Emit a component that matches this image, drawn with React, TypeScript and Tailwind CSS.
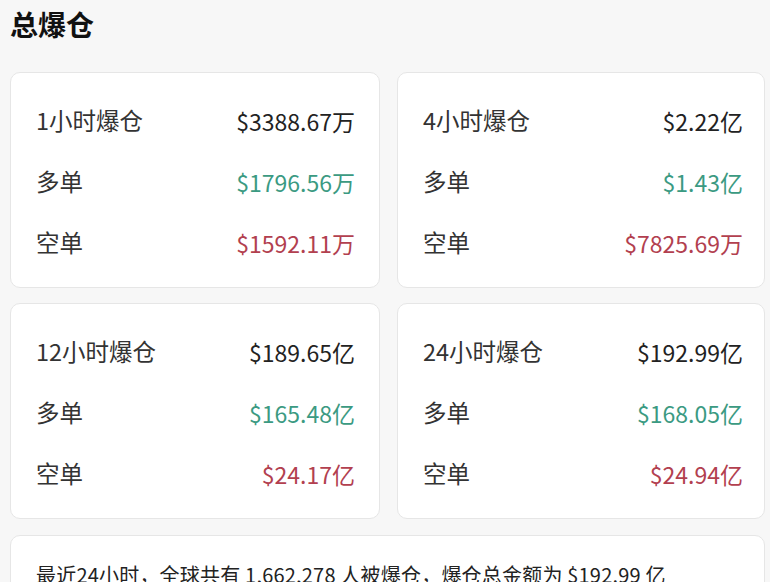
const FONT = { fontFamily: '"Noto Sans CJK SC", "Noto Sans", sans-serif' };

type Block = {
  label: string;
  total: string;
  long: string;
  short: string;
};

const BLOCKS: Block[] = [
  { label: "1小时爆仓", total: "$3388.67万", long: "$1796.56万", short: "$1592.11万" },
  { label: "4小时爆仓", total: "$2.22亿", long: "$1.43亿", short: "$7825.69万" },
  { label: "12小时爆仓", total: "$189.65亿", long: "$165.48亿", short: "$24.17亿" },
  { label: "24小时爆仓", total: "$192.99亿", long: "$168.05亿", short: "$24.94亿" },
];

function Row({ label, value, color }: { label: string; value: string; color: string }) {
  return (
    <div className="flex h-[28px] items-center justify-between">
      <span className="text-[23.5px] text-[#333]">{label}</span>
      <span className={`text-[23px] ${color}`}>{value}</span>
    </div>
  );
}

function Card({ b, right }: { b: Block; right: boolean }) {
  return (
    <div
      className={`flex h-[216px] flex-col gap-[33px] rounded-[10px] border border-[#e6e6e6] bg-white pb-[32px] pl-[25px] pt-[34px] ${
        right ? "pr-[21px]" : "pr-[24px]"
      }`}
    >
      <Row label={b.label} value={b.total} color="text-[#222]" />
      <Row label="多单" value={b.long} color="text-[#3b9a82]" />
      <Row label="空单" value={b.short} color="text-[#b2404f]" />
    </div>
  );
}

export default function App() {
  return (
    <div className="h-[582px] w-[770px] overflow-hidden bg-[#f7f7f7] pl-[10px] pr-[5px]" style={FONT}>
      <h1 className="pt-[5px] text-[28px] font-bold leading-[38px] text-[#111]">总爆仓</h1>
      <div className="mt-[29px] grid grid-cols-[370px_368px] gap-x-[17px] gap-y-[15px]">
        {BLOCKS.map((b, i) => (
          <Card key={b.label} b={b} right={i % 2 === 1} />
        ))}
      </div>
      <div className="mt-[16px] h-[120px] rounded-[10px] border border-[#e6e6e6] bg-white px-[25px] pt-[25px]">
        <p className="text-[20px] leading-[28px] tracking-[0.2px] text-[#222]">
          最近24小时，全球共有 1,662,278 人被爆仓，爆仓总金额为 $192.99 亿
        </p>
      </div>
    </div>
  );
}
